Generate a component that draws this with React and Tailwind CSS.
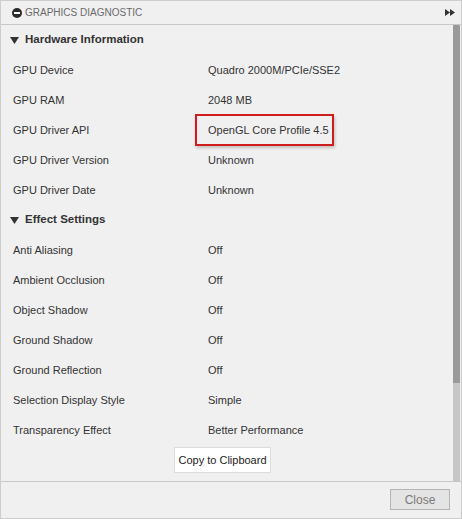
import React from "react";

const hardware = [
  ["GPU Device", "Quadro 2000M/PCIe/SSE2"],
  ["GPU RAM", "2048 MB"],
  ["GPU Driver API", "OpenGL Core Profile 4.5", true],
  ["GPU Driver Version", "Unknown"],
  ["GPU Driver Date", "Unknown"],
];

const effects = [
  ["Anti Aliasing", "Off"],
  ["Ambient Occlusion", "Off"],
  ["Object Shadow", "Off"],
  ["Ground Shadow", "Off"],
  ["Ground Reflection", "Off"],
  ["Selection Display Style", "Simple"],
  ["Transparency Effect", "Better Performance"],
];

function SectionHeader({ title }) {
  return (
    <div className="h-[30px] flex items-center pl-[9px] text-[11.5px] font-bold text-[#333]">
      <svg width="9" height="7" viewBox="0 0 9 7" className="mr-[6px]">
        <path d="M0 0 H9 L4.5 7 Z" fill="#333" />
      </svg>
      {title}
    </div>
  );
}

function Row({ label, value, boxed }) {
  return (
    <div className="h-[30px] flex items-center text-[11px] text-[#333]">
      <div className="w-[207px] pl-[12px]">{label}</div>
      {boxed ? (
        <div className="relative">
          {value}
          <div className="absolute left-[-13px] top-1/2 -translate-y-1/2 w-[139px] h-[32px] border-2 border-[#d01c1c] shadow-[1px_2px_3px_rgba(0,0,0,0.2)]" />
        </div>
      ) : (
        <div>{value}</div>
      )}
    </div>
  );
}

export default function App() {
  return (
    <div
      className="w-[462px] h-[519px] bg-[#f0f0f0] border border-[#cdcdcd] flex flex-col overflow-hidden"
      style={{ fontFamily: '"Liberation Sans", Arial, sans-serif' }}
    >
      {/* title bar */}
      <div className="h-[24px] shrink-0 flex items-center border-b border-[#c8c8c8] pl-[11px] pr-[6px]">
        <svg width="10" height="10" viewBox="0 0 10 10" className="mr-[3px]">
          <circle cx="5" cy="5" r="5" fill="#2a2a2a" />
          <rect x="2" y="4" width="6" height="2" fill="#fff" />
        </svg>
        <span className="text-[10px] text-[#6a6a6a]">GRAPHICS DIAGNOSTIC</span>
        <div className="flex-1" />
        <svg width="10" height="7" viewBox="0 0 10 7">
          <path d="M0 0 L5 3.5 L0 7 Z M5 0 L10 3.5 L5 7 Z" fill="#333" />
        </svg>
      </div>

      {/* body */}
      <div className="flex h-[457px] shrink-0 border-b border-[#c8c8c8]">
        <div className="flex-1 flex flex-col">
          <SectionHeader title="Hardware Information" />
          {hardware.map(([l, v, b]) => (
            <Row key={l} label={l} value={v} boxed={b} />
          ))}
          <SectionHeader title="Effect Settings" />
          {effects.map(([l, v]) => (
            <Row key={l} label={l} value={v} />
          ))}
          <div className="flex justify-center pt-[2px] pr-[9px]">
            <button className="h-[26px] px-[3px] bg-white border border-[#dcdcdc] text-[11px] text-[#222]">
              Copy to Clipboard
            </button>
          </div>
        </div>
        {/* scrollbar */}
        <div className="w-[7px] mr-[1px] flex flex-col">
          <div className="h-[358px] bg-[#9a9a9a] rounded-t-[1px]" />
          <div className="flex-1 bg-[#c6c6c6]" />
        </div>
      </div>

      {/* footer */}
      <div className="flex-1 flex items-start justify-end pr-[11px] pt-[7px]">
        <button className="w-[60px] h-[21px] bg-[#e4e4e4] border border-[#b4b4b4] text-[12px] text-[#7a7a7a]">
          Close
        </button>
      </div>
    </div>
  );
}
